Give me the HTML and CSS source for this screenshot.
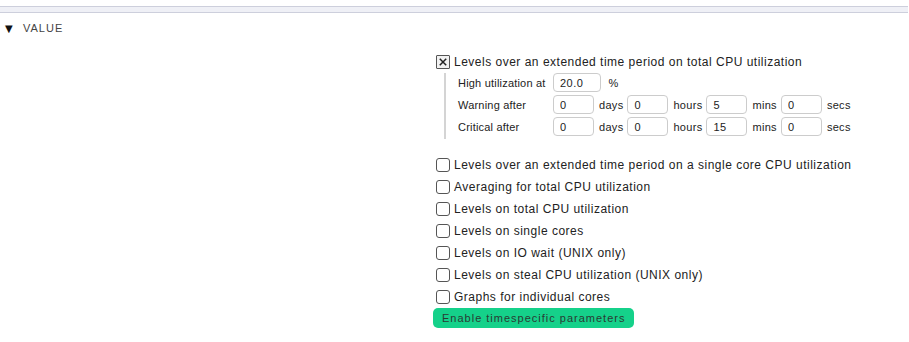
FILE: index.html
```html
<!DOCTYPE html>
<html lang="en">
<head>
    <meta charset="UTF-8">
    <title>CPU utilization - Value</title>
    <link rel="stylesheet" href="styles.css">
</head>
<body>
    <div class="topbar"></div>

    <div class="section-head">
        <span class="arrow">&#9660;</span>
        <span class="section-title">VALUE</span>
    </div>

    <div class="valuespec">
        <div class="option">
            <label class="check-row">
                <span class="checkbox checked">
                    <svg viewBox="0 0 13 13" width="13" height="13">
                        <path d="M3 3 L10 10 M10 3 L3 10" stroke="#222" stroke-width="1.6" fill="none"/>
                    </svg>
                </span>
                <span>Levels over an extended time period on total CPU utilization</span>
            </label>
            <div class="nested">
                <table class="params">
                    <tr>
                        <td class="title">High utilization at</td>
                        <td colspan="8">
                            <input class="num wide" type="text" value="20.0">
                            <span class="unit">%</span>
                        </td>
                    </tr>
                    <tr>
                        <td class="title">Warning after</td>
                        <td><input class="num" type="text" value="0"></td>
                        <td class="unit">days</td>
                        <td><input class="num" type="text" value="0"></td>
                        <td class="unit">hours</td>
                        <td><input class="num" type="text" value="5"></td>
                        <td class="unit">mins</td>
                        <td><input class="num" type="text" value="0"></td>
                        <td class="unit">secs</td>
                    </tr>
                    <tr>
                        <td class="title">Critical after</td>
                        <td><input class="num" type="text" value="0"></td>
                        <td class="unit">days</td>
                        <td><input class="num" type="text" value="0"></td>
                        <td class="unit">hours</td>
                        <td><input class="num" type="text" value="15"></td>
                        <td class="unit">mins</td>
                        <td><input class="num" type="text" value="0"></td>
                        <td class="unit">secs</td>
                    </tr>
                </table>
            </div>
        </div>

        <div class="option-list">
            <label class="check-row"><span class="checkbox"></span><span>Levels over an extended time period on a single core CPU utilization</span></label>
            <label class="check-row"><span class="checkbox"></span><span>Averaging for total CPU utilization</span></label>
            <label class="check-row"><span class="checkbox"></span><span>Levels on total CPU utilization</span></label>
            <label class="check-row"><span class="checkbox"></span><span>Levels on single cores</span></label>
            <label class="check-row"><span class="checkbox"></span><span>Levels on IO wait (UNIX only)</span></label>
            <label class="check-row"><span class="checkbox"></span><span>Levels on steal CPU utilization (UNIX only)</span></label>
            <label class="check-row"><span class="checkbox"></span><span>Graphs for individual cores</span></label>
        </div>

        <button class="btn-green" type="button">Enable timespecific parameters</button>
    </div>
</body>
</html>
```

FILE: styles.css
```css
body {
    margin: 0;
    font-family: "Liberation Sans", Arial, sans-serif;
    letter-spacing: 0.5px;
    color: #222;
    background-color: #ffffff;
}
.topbar {
    margin-top: 6px;
    margin-right: 1px;
    height: 5px;
    background-color: #eff0f6;
    border-top: 1px solid #cdcfdc;
    border-bottom: 1px solid #cdcfdc;
}
.section-head {
    display: flex;
    align-items: center;
    height: 18px;
    margin-top: 6px;
    padding-left: 5px;
    font-size: 11px;
    letter-spacing: 1px;
    color: #444;
}
.arrow {
    font-family: "DejaVu Sans", sans-serif;
    font-size: 10px;
    letter-spacing: 0;
    color: #111;
    width: 18px;
}
.valuespec {
    margin-left: 433px;
    margin-top: 14px;
}
.check-row {
    display: flex;
    align-items: center;
    height: 22px;
    font-size: 12px;
    color: #222;
}
.checkbox {
    box-sizing: border-box;
    width: 14px;
    height: 14px;
    margin-left: 3px;
    margin-right: 4px;
    border: 1px solid #555;
    border-radius: 3px;
    background-color: #fff;
    display: flex;
    align-items: center;
    justify-content: center;
}
.checkbox.checked {
    border-radius: 1px;
    background-color: #f2f2f2;
}
.checkbox svg {
    width: 12px;
    height: 12px;
}
.nested {
    margin-left: 11px;
    border-left: 2px solid #d4d4d4;
    padding-left: 12px;
}
.params {
    border-collapse: collapse;
    font-size: 11px;
    color: #222;
}
.params td {
    padding: 0 0 3px 0;
    height: 19px;
    vertical-align: middle;
}
.params td.title {
    width: 95px;
    padding-right: 0;
    letter-spacing: 0.2px;
    white-space: nowrap;
}
.params td.unit {
    padding: 0 4px 3px 5px;
    letter-spacing: 0.3px;
}
.num {
    box-sizing: border-box;
    width: 41px;
    height: 19px;
    padding: 0 6px;
    border: 1px solid #ccc;
    border-radius: 4px;
    font-family: inherit;
    font-size: 11px;
    letter-spacing: 0.5px;
    color: #222;
}
.num.wide {
    width: 48px;
}
span.unit {
    margin-left: 4px;
}
.option-list {
    margin-top: 15px;
}
.btn-green {
    margin-top: 0;
    height: 20px;
    padding: 0 9px;
    border: none;
    border-radius: 5px;
    background-color: #15d18a;
    color: #2a3a33;
    font-family: inherit;
    font-size: 11px;
    letter-spacing: 1px;
}
```
